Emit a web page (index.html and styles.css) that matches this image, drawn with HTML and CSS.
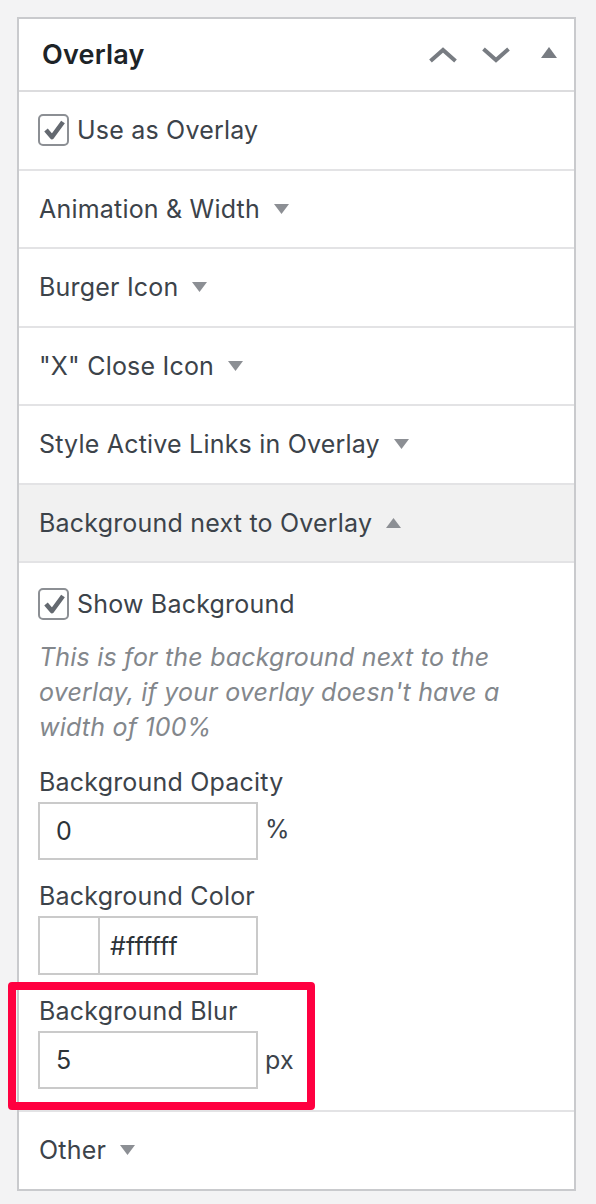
FILE: index.html
```html
<!DOCTYPE html>
<html>
<head>
<meta charset="utf-8">
<link rel="stylesheet" href="styles.css">
</head>
<body>
<div class="panel">
  <div class="panel-head">
    <h2 class="panel-title">Overlay</h2>
    <div class="head-actions">
      <svg class="chev" width="28" height="18" viewBox="0 0 28 18"><polyline points="1.5,15 14,4 26.5,15" fill="none" stroke="#787c82" stroke-width="4"/></svg>
      <svg class="chev chev-down" width="28" height="18" viewBox="0 0 28 18"><polyline points="1.5,3 14,14 26.5,3" fill="none" stroke="#787c82" stroke-width="4"/></svg>
      <svg class="tri-head" width="16" height="11" viewBox="0 0 16 11"><polygon points="8,0 16,11 0,11" fill="#787c82"/></svg>
    </div>
  </div>

  <div class="row">
    <label class="check-line">
      <span class="checkbox"><svg width="24" height="22" viewBox="0 0 24 22"><polyline points="4,11 10,18 21,3" fill="none" stroke="#646970" stroke-width="4.6" stroke-linejoin="round"/></svg></span>
      <span>Use as Overlay</span>
    </label>
  </div>

  <div class="row">
    <span>Animation &amp; Width</span>
    <svg class="tri" width="15" height="10" viewBox="0 0 15 10"><polygon points="0,0 15,0 7.5,10" fill="#8c8f94"/></svg>
  </div>

  <div class="row">
    <span>Burger Icon</span>
    <svg class="tri" width="15" height="10" viewBox="0 0 15 10"><polygon points="0,0 15,0 7.5,10" fill="#8c8f94"/></svg>
  </div>

  <div class="row">
    <span>"X" Close Icon</span>
    <svg class="tri" width="15" height="10" viewBox="0 0 15 10"><polygon points="0,0 15,0 7.5,10" fill="#8c8f94"/></svg>
  </div>

  <div class="row">
    <span>Style Active Links in Overlay</span>
    <svg class="tri" width="15" height="10" viewBox="0 0 15 10"><polygon points="0,0 15,0 7.5,10" fill="#8c8f94"/></svg>
  </div>

  <div class="row row-open">
    <span>Background next to Overlay</span>
    <svg class="tri" width="15" height="10" viewBox="0 0 15 10"><polygon points="7.5,0 15,10 0,10" fill="#8c8f94"/></svg>
  </div>

  <div class="section">
    <label class="check-line">
      <span class="checkbox"><svg width="24" height="22" viewBox="0 0 24 22"><polyline points="4,11 10,18 21,3" fill="none" stroke="#646970" stroke-width="4.6" stroke-linejoin="round"/></svg></span>
      <span>Show Background</span>
    </label>
    <p class="desc">This is for the background next to the overlay, if your overlay doesn't have a width of 100%</p>

    <div class="field field-first">
      <div class="field-label">Background Opacity</div>
      <div class="field-input">
        <div class="input">0</div>
        <span class="unit unit-top">%</span>
      </div>
    </div>

    <div class="field">
      <div class="field-label">Background Color</div>
      <div class="field-input">
        <div class="color-input">
          <span class="swatch"></span>
          <span class="hex">#ffffff</span>
        </div>
      </div>
    </div>

    <div class="field field-marked">
      <div class="field-label">Background Blur</div>
      <div class="field-input">
        <div class="input">5</div>
        <span class="unit">px</span>
      </div>
      <div class="highlight"></div>
    </div>
  </div>

  <div class="row row-last">
    <span>Other</span>
    <svg class="tri" width="15" height="10" viewBox="0 0 15 10"><polygon points="0,0 15,0 7.5,10" fill="#8c8f94"/></svg>
  </div>
</div>
</body>
</html>
```

FILE: styles.css
```css
html, body {
  margin: 0;
  padding: 0;
}
body {
  background: #f3f3f4;
  font-family: Inter, "Noto Sans", "Liberation Sans", sans-serif;
  color: #3c434a;
  font-size: 25px;
  letter-spacing: 0.2px;
}
.panel {
  margin: 17px 0 0 17px;
  width: 555px;
  background: #ffffff;
  border: 2px solid #c9cacd;
}
.panel-head {
  height: 71px;
  display: flex;
  align-items: center;
  justify-content: space-between;
  padding: 0 17px 0 23px;
  border-bottom: 2px solid #dcdcde;
}
.panel-title {
  margin: 0;
  font-size: 27px;
  font-weight: 600;
  color: #1d2327;
  letter-spacing: 0.2px;
}
.head-actions {
  display: flex;
  align-items: center;
}
.chev-down {
  margin-left: 25px;
}
.tri-head {
  margin-left: 31px;
  margin-top: -4px;
}
.row {
  height: 76.5px;
  display: flex;
  align-items: center;
  padding: 0 20px;
  border-bottom: 2px solid #e3e3e5;
}
.row .tri {
  margin-left: 14px;
}
.row-open {
  background: #f1f1f1;
}
.row-last {
  border-bottom: none;
}
.check-line {
  display: flex;
  align-items: center;
}
.checkbox {
  width: 27px;
  height: 28px;
  border: 2px solid #8c8f94;
  border-radius: 5px;
  display: flex;
  align-items: center;
  justify-content: center;
  margin-right: 8px;
  margin-left: -1px;
  background: #fff;
}
.section {
  padding: 25px 20px 21px;
  border-bottom: 2px solid #e3e3e5;
}
.section .check-line {
  height: 32px;
}
.desc {
  margin: 20px 0 0;
  font-style: italic;
  color: #83878c;
  line-height: 35px;
  width: 462px;
}
.field {
  margin-top: 22px;
}
.field-first {
  margin-top: 23px;
}
.field-marked {
  position: relative;
}
.field-label {
  line-height: 28px;
  margin-bottom: 6px;
}
.field-input {
  display: flex;
  align-items: center;
}
.input {
  box-sizing: border-box;
  width: 220px;
  height: 58px;
  border: 2px solid #cacaca;
  padding-left: 16px;
  display: flex;
  align-items: center;
  font-size: 25px;
  color: #2c3338;
  margin-left: -1px;
}
.unit {
  margin-left: 7px;
}
.unit-top {
  margin-top: -4px;
}
.color-input {
  box-sizing: border-box;
  width: 220px;
  height: 59px;
  border: 2px solid #cacaca;
  display: flex;
  margin-left: -1px;
}
.swatch {
  width: 58px;
  border-right: 2px solid #cacaca;
  background: #fff;
}
.hex {
  display: flex;
  align-items: center;
  padding-left: 10px;
  font-size: 25px;
  color: #2c3338;
}
.highlight {
  box-sizing: border-box;
  position: absolute;
  left: -31px;
  top: -15px;
  width: 307px;
  height: 128px;
  border: 8px solid #ff0040;
  border-radius: 4px;
  pointer-events: none;
}
```
